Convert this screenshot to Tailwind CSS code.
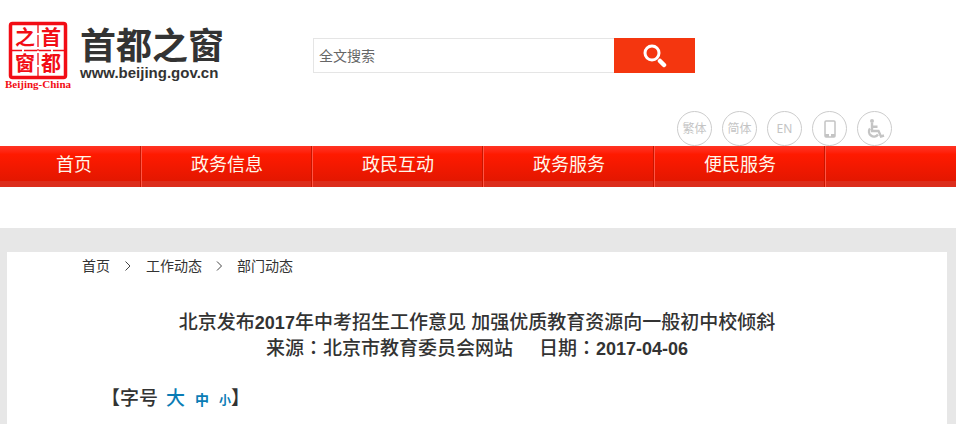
<!DOCTYPE html>
<html lang="zh-CN">
  <head>
    <meta charset="UTF-8" />
    <meta name="viewport" content="width=device-width, initial-scale=1.0" />
    <title>首都之窗</title>
    <script src="https://cdn.jsdelivr.net/npm/@tailwindcss/browser@4"></script>
  </head>
  <body class="bg-white font-['Liberation_Sans','Noto_Sans_CJK_SC',sans-serif] text-[#333]">
    <!-- Header -->
    <header>
      <div class="flex items-start pt-5">
        <a href="#" class="flex w-[313px] shrink-0 pl-1">
          <svg class="h-[72px] w-[68px]" viewBox="0 0 68 72" aria-label="Beijing-China">
            <rect x="6.500" y="3.500" width="55" height="54" rx="2" fill="#fff" stroke="#f20d15" stroke-width="3.500" />
            <path d="M34 4v9M34 15v12M34 29v2M34 33v12M34 47v11M7 30.500h11M20 30.500h13M35 30.500h12M49 30.500h13" stroke="#f20d15" stroke-width="1.300" />
            <g fill="#f20d15" font-family="Noto Sans CJK SC, sans-serif" font-weight="700" font-size="20" text-anchor="middle">
              <text x="21" y="25">之</text>
              <text x="47" y="25">首</text>
              <text x="21" y="51">窗</text>
              <text x="47" y="51">都</text>
            </g>
            <text x="34" y="68" fill="#f20d15" font-family="Liberation Serif, serif" font-weight="700" font-size="11" text-anchor="middle">Beijing-China</text>
          </svg>
          <span class="flex flex-col pt-[9px] pl-2">
            <span class="text-4xl leading-9 font-bold">首都之窗</span>
            <span class="text-[15px] leading-4 font-bold">www.beijing.gov.cn</span>
          </span>
        </a>
        <form class="mt-[18px] flex h-[35px] w-2/5 shrink-0">
          <input type="text" aria-label="全文搜索" placeholder="全文搜索" class="min-w-0 flex-1 border border-r-0 border-[#e5e5e5] px-[5px] text-sm placeholder:text-[#666]" />
          <button type="button" aria-label="搜索" class="flex w-[81px] items-center justify-center bg-[#f4360f]">
            <svg class="size-6" viewBox="0 0 24 24" fill="none" stroke="#fff" stroke-linecap="round">
              <circle cx="9" cy="9" r="7" stroke-width="3" />
              <path d="M17 17l4 4" stroke-width="4.500" />
            </svg>
          </button>
        </form>
      </div>
      <div class="mt-[19px] flex justify-end gap-[10px] pr-16 text-xs text-[#c4c4c4]">
        <a href="#" class="flex size-[35px] items-center justify-center rounded-full border border-[#ccc]">繁体</a>
        <a href="#" class="flex size-[35px] items-center justify-center rounded-full border border-[#ccc]">简体</a>
        <a href="#" class="flex size-[35px] items-center justify-center rounded-full border border-[#ccc] font-['Noto_Sans',sans-serif]">EN</a>
        <a href="#" aria-label="手机版" class="flex size-[35px] items-center justify-center rounded-full border border-[#ccc]">
          <svg class="h-[18px] w-3" viewBox="0 0 12 18" fill="none" stroke="#c4c4c4">
            <rect x="1" y="1" width="10" height="16" rx="1" stroke-width="1.500" />
            <path d="M1 15.500h4M7 15.500h4" stroke-width="3" />
          </svg>
        </a>
        <a href="#" aria-label="无障碍" class="flex size-[35px] items-center justify-center rounded-full border border-[#ccc]">
          <svg class="size-5" viewBox="0 0 20 20" fill="none" stroke="#c4c4c4" stroke-width="2.400">
            <circle cx="7" cy="2" r="2" fill="#c4c4c4" stroke="none" />
            <path d="M7 4v8h6.500l2.500 5.500 3-1M7 7.700h5.500" />
            <path d="M5 9.500a5 5 0 1 0 8 6" />
          </svg>
        </a>
      </div>
    </header>

    <!-- Main nav -->
    <nav class="flex h-[41px] bg-linear-to-b from-[#ff3322] from-0% via-[#ff1a00] via-20% to-[#e31700] to-85% text-lg leading-[38px] text-[#fff6ea] shadow-[inset_0_-6px_0_#dc2d1c]">
      <a href="#" class="border-r border-[#c91500] pr-12 pl-14">首页</a>
      <a href="#" class="border-x border-r-[#c91500] border-l-[#ff5544] pr-12 pl-[49px]">政务信息</a>
      <a href="#" class="border-x border-r-[#c91500] border-l-[#ff5544] pr-12 pl-[49px]">政民互动</a>
      <a href="#" class="border-x border-r-[#c91500] border-l-[#ff5544] pr-12 pl-[49px]">政务服务</a>
      <a href="#" class="border-x border-r-[#c91500] border-l-[#ff5544] pr-12 pl-[49px]">便民服务</a>
      <span class="border-l border-[#ff5544]"></span>
    </nav>

    <!-- Article -->
    <main class="mt-[41px] bg-[#e7e7e7] pt-6 pr-[9px] pl-[7px]">
      <article class="bg-white pb-4">
        <div class="flex h-7 items-center gap-[14px] pl-[75px] text-sm">
          <a href="#">首页</a>
          <svg class="h-[10px] w-2" viewBox="0 0 8 10" fill="none" stroke="#444"><path d="M1.500 .5L6 5 1.500 9.500" /></svg>
          <a href="#">工作动态</a>
          <svg class="h-[10px] w-[7px]" viewBox="0 0 7 10" fill="none" stroke="#444"><path d="M1 .5L5.500 5 1 9.500" /></svg>
          <a href="#">部门动态</a>
        </div>
        <h1 class="mt-[30px] text-center text-[19px] leading-[26px] font-medium">
          北京发布<span class="text-lg leading-[26px] font-bold">2017</span>年中考招生工作意见 加强优质教育资源向一般初中校倾斜<br />
          来源<span class="font-['Liberation_Sans','Noto_Sans_CJK_TC',sans-serif]" lang="zh-TW">：</span>北京市教育委员会网站<span class="pl-[26px]">日期</span><span class="font-['Liberation_Sans','Noto_Sans_CJK_TC',sans-serif]" lang="zh-TW">：</span><span class="text-lg leading-[26px] font-bold">2017-04-06</span>
        </h1>
        <div class="mt-6 flex items-baseline pl-[94px] text-[19px] leading-[26px] font-medium">
          <span>【字号</span>
          <button type="button" class="ml-2 text-[#0a7cb5]">大</button>
          <button type="button" class="ml-[10px] text-sm font-bold text-[#0a7cb5]">中</button>
          <button type="button" class="ml-[10px] text-xs font-bold text-[#0a7cb5]">小</button>
          <span>】</span>
        </div>
      </article>
    </main>
  </body>
</html>
